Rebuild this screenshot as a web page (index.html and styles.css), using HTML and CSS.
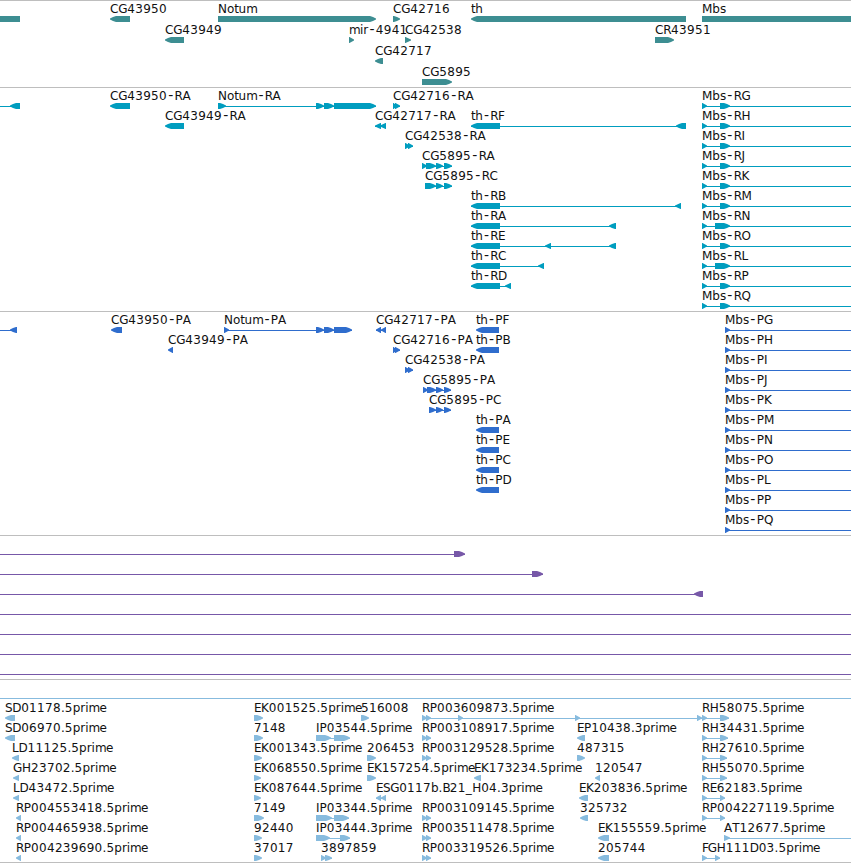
FILE: index.html
```
<!DOCTYPE html>
<html lang="en">
<head>
    <meta charset="UTF-8">
    <meta name="viewport" content="width=device-width, initial-scale=1.0">
    <title>Genome Browser</title>
    <link rel="stylesheet" href="styles.css">
</head>
<body>
    <main class="browser">
        <svg class="track genes" id="genes"></svg>
        <svg class="track transcripts" id="transcripts"></svg>
        <svg class="track proteins" id="proteins"></svg>
        <svg class="track insertions" id="insertions"></svg>
        <svg class="track ests" id="ests"></svg>
    </main>
    <script src="tracks.js"></script>
</body>
</html>
```

FILE: styles.css
```
/* Basic styling */
body {
    margin: 0;
    background-color: #fff;
    overflow: hidden;
}

.browser {
    display: flex;
    flex-direction: column;
    border-bottom: 1px solid #bebebe;
}

/* Tracks */
.track {
    display: block;
    box-sizing: border-box;
    width: 100%;
    border-top: 1px solid #bebebe;
    overflow: hidden;
}
.genes {
    height: 87px;
    fill: #3d8e92;
}
.transcripts {
    height: 224px;
    fill: #009dbf;
}
.proteins {
    height: 224px;
    fill: #2f6dcd;
}
.insertions {
    height: 144px;
    fill: #7758a8;
}
.ests {
    height: 183px;
    fill: #87bbde;
}

/* Feature names */
.label {
    font-family: "DejaVu Sans", Verdana, sans-serif;
    font-size: 12px;
    fill: #111;
}
.hyphen {
    font-size: 14px;
}
```

FILE: tracks.js
```
// feature: [row, strand, label, [[start, end], ...]]
const OFF_L = [-20, -10];
const OFF_R = [870, 880];

const genes = [
    [0, -1, "", [[-20, 20]]],
    [0, -1, "CG43950", [[110, 130]]],
    [1, -1, "CG43949", [[165, 184]]],
    [0, 1, "Notum", [[218, 376]]],
    [1, 1, "mir-4941", [[349, 354]]],
    [2, -1, "CG42717", [[375, 383]]],
    [0, 1, "CG42716", [[393, 400]]],
    [1, 1, "CG42538", [[405, 411]]],
    [3, 1, "CG5895", [[422, 452]]],
    [0, -1, "th", [[471, 686]]],
    [1, 1, "CR43951", [[655, 674]]],
    [0, 1, "Mbs", [[702, 880]]]
];

const transcripts = [
    [0, -1, "", [OFF_L, [10, 20]]],
    [0, -1, "CG43950-RA", [[110, 130]]],
    [1, -1, "CG43949-RA", [[165, 184]]],
    [0, 1, "Notum-RA", [[218, 226], [316, 324], [324, 334], [334, 376]]],
    [0, 1, "CG42716-RA", [[393, 397], [395, 400]]],
    [1, -1, "CG42717-RA", [[375, 381], [380, 386]]],
    [2, 1, "CG42538-RA", [[405, 410], [408, 413]]],
    [3, 1, "CG5895-RA", [[422, 427], [426, 436], [436, 443], [444, 452]]],
    [4, 1, "CG5895-RC", [[425, 436], [436, 443], [444, 452]]],
    [1, -1, "th-RF", [[471, 500], [676, 686]]],
    [5, -1, "th-RB", [[471, 500], [675, 681]]],
    [6, -1, "th-RA", [[471, 500], [609, 616]]],
    [7, -1, "th-RE", [[471, 500], [545, 551], [609, 616]]],
    [8, -1, "th-RC", [[471, 500], [538, 544]]],
    [9, -1, "th-RD", [[471, 500], [505, 511]]]
];

const proteins = [
    [0, -1, "", [OFF_L, [10, 17]]],
    [0, -1, "CG43950-PA", [[111, 122]]],
    [1, -1, "CG43949-PA", [[168, 173]]],
    [0, 1, "Notum-PA", [[224, 229], [316, 324], [324, 334], [334, 352]]],
    [0, -1, "CG42717-PA", [[376, 381], [381, 386]]],
    [1, 1, "CG42716-PA", [[393, 397], [395, 400]]],
    [2, 1, "CG42538-PA", [[405, 410], [408, 413]]],
    [3, 1, "CG5895-PA", [[423, 428], [427, 436], [436, 443], [444, 451]]],
    [4, 1, "CG5895-PC", [[429, 436], [436, 443], [444, 451]]],
    [0, -1, "th-PF", [[476, 499]]],
    [1, -1, "th-PB", [[476, 499]]],
    [5, -1, "th-PA", [[476, 499]]],
    [6, -1, "th-PE", [[476, 499]]],
    [7, -1, "th-PC", [[476, 499]]],
    [8, -1, "th-PD", [[476, 499]]]
];

// Mbs isoforms, one per row
"GHIJKMNOLPQ".split("").forEach((iso, row) => {
    const exon = iso === "N" || iso === "L" ? [715, 730] : [720, 730];
    transcripts.push([row, 1, "Mbs-R" + iso, [[702, 707], exon, OFF_R]]);
    proteins.push([row, 1, "Mbs-P" + iso, [[725, 730], OFF_R]]);
});

const insertions = [
    [0, 1, "", [OFF_L, [454, 465]]],
    [1, 1, "", [OFF_L, [532, 543]]],
    [2, -1, "", [OFF_L, [694, 703]]],
    [3, 1, "", [OFF_L, OFF_R]],
    [4, 1, "", [OFF_L, OFF_R]],
    [5, 1, "", [OFF_L, OFF_R]],
    [6, 1, "", [OFF_L, OFF_R]]
];

const ests = [
    [0, 1, "", [OFF_L, OFF_R]],
    [1, -1, "SD01178.5prime", [[5, 15]]],
    [2, -1, "SD06970.5prime", [[5, 15]]],
    [3, -1, "LD11125.5prime", [[12, 19]]],
    [4, -1, "GH23702.5prime", [[13, 19]]],
    [5, -1, "LD43472.5prime", [[13, 19]]],
    [6, -1, "RP004553418.5prime", [[16, 21]]],
    [7, -1, "RP004465938.5prime", [[16, 21]]],
    [8, -1, "RP004239690.5prime", [[16, 21]]],
    [1, 1, "EK001525.5prime", [[254, 263]]],
    [2, 1, "7148", [[254, 263]]],
    [3, 1, "EK001343.5prime", [[254, 262]]],
    [4, 1, "EK068550.5prime", [[254, 261]]],
    [5, 1, "EK087644.5prime", [[254, 261]]],
    [6, 1, "7149", [[254, 264]]],
    [7, 1, "92440", [[254, 262]]],
    [8, 1, "37017", [[254, 262]]],
    [2, 1, "IP03544.5prime", [[316, 331], [334, 350]]],
    [6, 1, "IP03344.5prime", [[316, 332], [334, 349]]],
    [7, 1, "IP03444.3prime", [[316, 330], [340, 350]]],
    [8, 1, "3897859", [[321, 326], [325, 332]]],
    [1, 1, "516008", [[361, 369]]],
    [3, 1, "206453", [[367, 376]]],
    [4, 1, "EK157254.5prime", [[367, 376]]],
    [5, -1, "ESG0117b.B21_H04.3prime", [[376, 381], [381, 386]]],
    [1, 1, "RP003609873.5prime", [[422, 427], [426, 431], [458, 463], [575, 580], [697, 702]]],
    [2, 1, "RP003108917.5prime", [[422, 427], [426, 431]]],
    [3, 1, "RP003129528.5prime", [[422, 427], [426, 431]]],
    [6, 1, "RP003109145.5prime", [[422, 427], [426, 431]]],
    [7, 1, "RP003511478.5prime", [[422, 427], [426, 431]]],
    [8, 1, "RP003319526.5prime", [[422, 427], [426, 431]]],
    [4, -1, "EK173234.5prime", [[474, 481]]],
    [2, -1, "EP10438.3prime", [[577, 585]]],
    [3, 1, "487315", [[577, 585]]],
    [4, -1, "120547", [[595, 600]]],
    [5, -1, "EK203836.5prime", [[579, 588]]],
    [6, -1, "325732", [[580, 588]]],
    [7, -1, "EK155559.5prime", [[598, 609]]],
    [8, -1, "205744", [[598, 609]]],
    [1, 1, "RH58075.5prime", [[702, 707], [720, 729]]],
    [2, 1, "RH34431.5prime", [[702, 707], [720, 728]]],
    [3, 1, "RH27610.5prime", [[702, 707], [720, 727]]],
    [4, 1, "RH55070.5prime", [[702, 707], [720, 727]]],
    [5, 1, "RE62183.5prime", [[702, 707], [720, 725]]],
    [6, 1, "RP004227119.5prime", [[702, 707], [720, 725]]],
    [7, 1, "AT12677.5prime", [[724, 730], OFF_R]],
    [8, 1, "FGH111D03.5prime", [[702, 707], [715, 720]]]
];

// advance of each letter, digits are all the same width
const DIGIT = 7.95;
const ADVANCE = {
    "-": 7.6, ".": 3.8, "_": 6.5,
    A: 8.2, B: 7.4, C: 8.3, D: 9, E: 7, F: 5.8, G: 9, H: 9, I: 3.6, J: 3.6, K: 7.8,
    L: 6.6, M: 10.3, N: 8.9, O: 9.2, P: 7.2, Q: 9.2, R: 7.8, S: 7.2, T: 7.4,
    b: 7.6, e: 7.2, h: 7.4, i: 3.3, m: 11, o: 7.4, p: 7.6, r: 4.9, s: 6.2, t: 4.3, u: 7.6
};

function exonPoints(start, end, strand, y) {
    const width = end - start;
    const tip = Math.min(6, width - 0.5);
    const bulge = width >= 7 ? 1 : 1.2;
    const head = strand > 0 ? end : start;
    const back = strand > 0 ? start : end;
    return [
        [back, y],
        [head - strand * tip, y],
        [head - strand * tip / 2, y + bulge],
        [head, y + 2.6],
        [head, y + 3.6],
        [head - strand * tip / 2, y + 6 - bulge],
        [head - strand * tip, y + 6],
        [back, y + 6]
    ].join(" ");
}

// x of every letter of a label, the hyphen sits in the middle of its slot
function letterPositions(label, x) {
    return label.split("").map((ch) => {
        const pos = (ch === "-" ? x + 1.2 : x).toFixed(1);
        x += ADVANCE[ch] || DIGIT;
        return pos;
    }).join(" ");
}

function labelText(label) {
    return label.replace("-", '<tspan class="hyphen">-</tspan>');
}

function renderTrack(id, features, pitch) {
    let shapes = "";
    let labels = "";

    features.forEach(([row, strand, label, exons]) => {
        const y = 15 + row * pitch;
        const first = exons[0][0];
        const last = exons[exons.length - 1][1];

        if (exons.length > 1) {
            shapes += `<rect x="${first}" y="${y + 3}" width="${last - first}" height="1"/>`;
        }
        exons.forEach(([start, end]) => {
            shapes += `<polygon points="${exonPoints(start, end, strand, y)}"/>`;
        });
        if (label) {
            labels += `<text class="label" x="${letterPositions(label, first)}" y="${y - 3}">${labelText(label)}</text>`;
        }
    });

    document.getElementById(id).innerHTML = shapes + labels;
}

renderTrack("genes", genes, 21);
renderTrack("transcripts", transcripts, 20);
renderTrack("proteins", proteins, 20);
renderTrack("insertions", insertions, 20);
renderTrack("ests", ests, 20);
```
